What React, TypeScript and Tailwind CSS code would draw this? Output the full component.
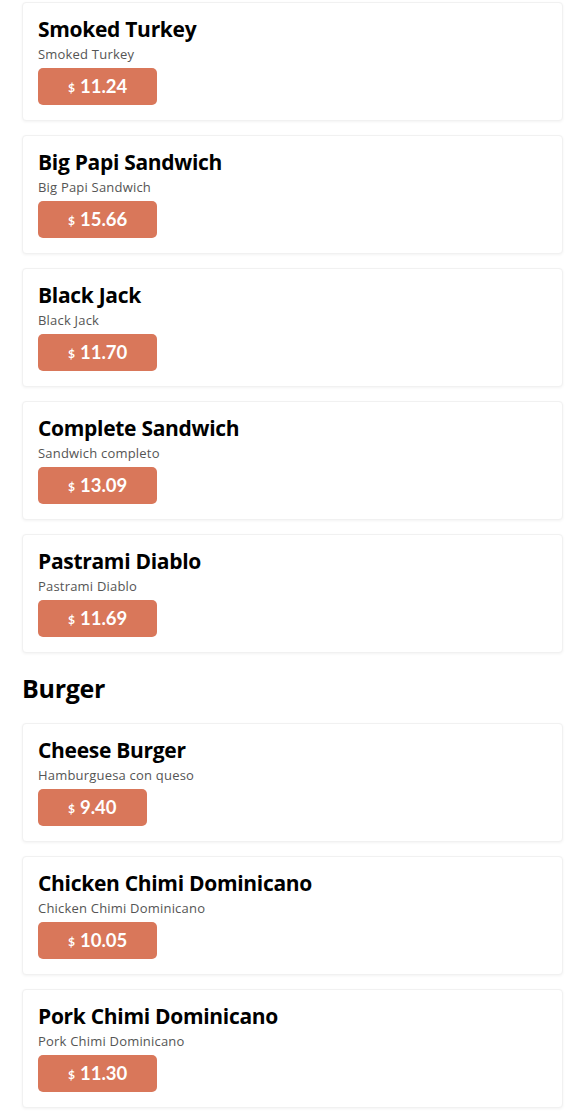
const sandwiches = [
  { name: "Smoked Turkey", sub: "Smoked Turkey", price: "11.24" },
  { name: "Big Papi Sandwich", sub: "Big Papi Sandwich", price: "15.66" },
  { name: "Black Jack", sub: "Black Jack", price: "11.70" },
  { name: "Complete Sandwich", sub: "Sandwich completo", price: "13.09" },
  { name: "Pastrami Diablo", sub: "Pastrami Diablo", price: "11.69" },
];

const burgers = [
  { name: "Cheese Burger", sub: "Hamburguesa con queso", price: "9.40" },
  { name: "Chicken Chimi Dominicano", sub: "Chicken Chimi Dominicano", price: "10.05" },
  { name: "Pork Chimi Dominicano", sub: "Pork Chimi Dominicano", price: "11.30" },
];

type Item = { name: string; sub: string; price: string };

function ItemCard({ item }: { item: Item }) {
  return (
    <div className="mb-[14px] rounded border border-[#f1f1f1] bg-white px-[15px] pt-[12px] pb-[15px] shadow-[0_1px_3px_rgba(0,0,0,0.05)]">
      <h3 className="font-['Open_Sans',sans-serif] text-[21px] font-bold leading-[28px] tracking-[-0.3px] text-black">{item.name}</h3>
      <p className="mt-[1px] font-['Open_Sans',sans-serif] text-[13px] leading-[20px] tracking-[0.2px] text-[#555]">{item.sub}</p>
      <button className="mt-[4px] flex h-[37px] items-center rounded-[5px] bg-[#d9775a] px-[30px] text-white">
        <span className="mr-[5px] mt-[3px] text-[12px] font-bold">$</span>
        <span className="text-[18.5px] font-bold">{item.price}</span>
      </button>
    </div>
  );
}

export default function App() {
  return (
    <div className="min-h-screen bg-white px-[22px] pt-[2px] font-['Lato',sans-serif]">
      <div className="w-[541px]">
        {sandwiches.map((item) => (
          <ItemCard key={item.name} item={item} />
        ))}
        <h2 className="mt-[18px] mb-[18px] font-['Open_Sans',sans-serif] text-[25px] font-bold leading-[34px] tracking-[-0.3px] text-black">Burger</h2>
        {burgers.map((item) => (
          <ItemCard key={item.name} item={item} />
        ))}
      </div>
    </div>
  );
}
